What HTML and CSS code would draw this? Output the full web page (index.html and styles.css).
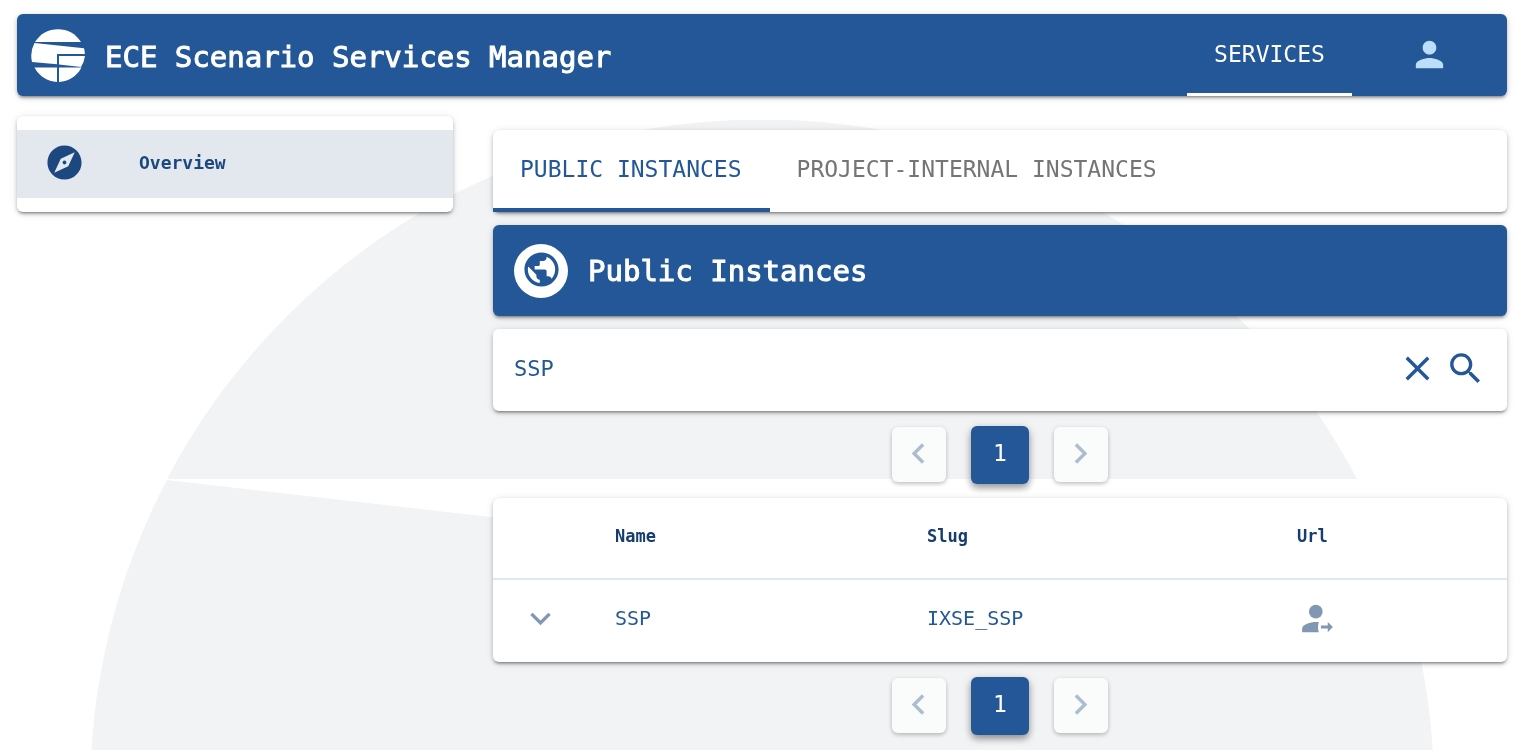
FILE: index.html
```html
<!DOCTYPE html>
<html lang="en">
<head>
<meta charset="utf-8">
<title>ECE Scenario Services Manager</title>
<link rel="stylesheet" href="styles.css">
</head>
<body>
<svg class="backdrop" viewBox="0 0 1344 1344" aria-hidden="true">
  <path d="M77 359A672 672 0 0 1 1267 359Z"/>
  <path d="M77 360L1322.400 502.500A672 672 0 1 1 76.800 360Z"/>
</svg>
<header class="topbar card-blue">
  <svg class="logo" viewBox="0 0 54 54" aria-hidden="true">
    <path fill="#fff" d="M4 14A27 27 0 0 1 50 14Z"/>
    <path fill="#fff" d="M3.500 15L53 20.300A27 27 0 0 1 53.900 26H26V36.300L1 34A27 27 0 0 1 3.500 15Z"/>
    <path fill="#fff" d="M28 28H54A27 27 0 0 1 50 39L28 36.500Z"/>
    <path fill="#fff" d="M3.500 39.500H26V54A27 27 0 0 1 3.500 39.500ZM28 39.500H50.500A27 27 0 0 1 28 54Z"/>
  </svg>
  <h1 class="title">ECE Scenario Services Manager</h1>
  <nav class="topnav">
    <a class="topnav-link" href="#services">SERVICES</a>
    <button class="account" type="button" aria-label="Account">
      <svg viewBox="0 0 24 24"><path d="M12 12c2.210 0 4-1.790 4-4s-1.790-4-4-4-4 1.790-4 4 1.790 4 4 4zm0 2c-2.670 0-8 1.340-8 4v2h16v-2c0-2.660-5.330-4-8-4z"/></svg>
    </button>
  </nav>
</header>
<div class="layout">
  <aside class="sidebar card">
    <a class="side-link" href="#overview">
      <svg viewBox="0 0 24 24"><path d="M12 10.900c-.610 0-1.100.490-1.100 1.100s.490 1.100 1.100 1.100c.610 0 1.100-.490 1.100-1.100s-.490-1.100-1.100-1.100zM12 2C6.480 2 2 6.480 2 12s4.480 10 10 10 10-4.480 10-10S17.520 2 12 2zm2.190 12.190L6 18l3.810-8.190L18 6l-3.810 8.190z"/></svg>
      <span>Overview</span>
    </a>
  </aside>
  <main class="content">
    <div class="tabs card" role="tablist">
      <button class="tab tab-active" type="button" role="tab" aria-selected="true">PUBLIC INSTANCES</button>
      <button class="tab" type="button" role="tab" aria-selected="false">PROJECT-INTERNAL INSTANCES</button>
    </div>
    <section class="banner card-blue">
      <span class="banner-icon">
        <svg viewBox="0 0 24 24"><path d="M12 2C6.480 2 2 6.480 2 12s4.480 10 10 10 10-4.480 10-10S17.520 2 12 2zM4 12c0-.610.080-1.210.210-1.780L8.990 15v1c0 1.100.900 2 2 2v1.930C7.060 19.430 4 16.070 4 12zm13.890 5.400c-.260-.810-1-1.400-1.900-1.400h-1v-3c0-.550-.450-1-1-1h-6v-2h2c.550 0 1-.450 1-1V7h2c1.100 0 2-.900 2-2v-.410C17.920 5.770 20 8.650 20 12c0 2.080-.810 3.980-2.110 5.400z"/></svg>
      </span>
      <h2 class="title">Public Instances</h2>
    </section>
    <form class="search card">
      <input class="search-input" type="text" value="SSP" aria-label="Search instances">
      <button class="icon-button" type="button" aria-label="Clear"><svg viewBox="0 0 24 24"><path d="M19 6.410L17.590 5 12 10.590 6.410 5 5 6.410 10.590 12 5 17.590 6.410 19 12 13.410 17.590 19 19 17.590 13.410 12z"/></svg></button>
      <button class="icon-button" type="submit" aria-label="Search"><svg viewBox="0 0 24 24"><path d="M15.500 14h-.790l-.280-.270C15.410 12.590 16 11.110 16 9.500 16 5.910 13.090 3 9.500 3S3 5.910 3 9.500 5.910 16 9.500 16c1.610 0 3.090-.590 4.230-1.570l.270.280v.790l5 4.990L20.490 19l-4.990-5zm-6 0C7.010 14 5 11.990 5 9.500S7.010 5 9.500 5 14 7.010 14 9.500 11.990 14 9.500 14z"/></svg></button>
    </form>
    <nav class="pager" aria-label="Pages, top">
      <button class="page-step" type="button" aria-label="Previous page"><svg viewBox="0 0 24 24"><path d="M15.410 7.410L14 6l-6 6 6 6 1.410-1.410L10.830 12z"/></svg></button>
      <button class="page-current" type="button" aria-current="page">1</button>
      <button class="page-step" type="button" aria-label="Next page"><svg viewBox="0 0 24 24"><path d="M10 6L8.590 7.410 13.170 12l-4.580 4.590L10 18l6-6z"/></svg></button>
    </nav>
    <div class="card">
      <table class="instances">
        <colgroup><col class="col-expand"><col class="col-name"><col class="col-slug"><col></colgroup>
        <thead><tr><td></td><th scope="col">Name</th><th scope="col">Slug</th><th scope="col">Url</th></tr></thead>
        <tbody><tr>
          <td class="cell-expand"><button class="row-button" type="button" aria-label="Expand row"><svg viewBox="0 0 24 24"><path d="M16.590 8.590L12 13.170 7.410 8.590 6 10l6 6 6-6z"/></svg></button></td>
          <td>SSP</td>
          <td>IXSE_SSP</td>
          <td><a class="row-button" href="#ssp" aria-label="Open SSP"><svg viewBox="0 0 24 24"><circle cx="11" cy="8" r="4"/><path d="M3 20v-2c0-2.660 5-4 8-4h1.800c-.600 1.900-.700 4 0 6zM14 16.100h4v-2.100l3 3-3 3v-2.100h-4z"/></svg></a></td>
        </tr></tbody>
      </table>
    </div>
    <nav class="pager" aria-label="Pages, bottom">
      <button class="page-step" type="button" aria-label="Previous page"><svg viewBox="0 0 24 24"><path d="M15.410 7.410L14 6l-6 6 6 6 1.410-1.410L10.830 12z"/></svg></button>
      <button class="page-current" type="button" aria-current="page">1</button>
      <button class="page-step" type="button" aria-label="Next page"><svg viewBox="0 0 24 24"><path d="M10 6L8.590 7.410 13.170 12l-4.580 4.590L10 18l6-6z"/></svg></button>
    </nav>
  </main>
</div>
</body>
</html>
```
FILE: styles.css
```css
* { box-sizing: border-box; }
html { height: 100%; overflow: hidden; }
body {
  margin: 0;
  min-height: 100%;
  padding: 14px 15px 0 17px;
  background: #fff;
  color: #245797;
  font-family: "DejaVu Sans Mono", "Liberation Mono", monospace;
}
button, input { font: inherit; color: inherit; border: 0; background: none; padding: 0; margin: 0; }
button { cursor: pointer; }
a { color: inherit; text-decoration: none; }
svg { display: block; fill: currentColor; }

/* Large emblem behind the page, centred on the window */
.backdrop {
  position: fixed;
  z-index: -1;
  top: 120px;
  left: 50%;
  width: 1344px;
  margin-left: -671px;
  color: #f2f3f5;
}

.card, .card-blue {
  border-radius: 6px;
  background: #fff;
  box-shadow: 0 3px 3px -2px rgba(0,0,0,.36), 0 2px 4px rgba(0,0,0,.22), 0 1px 10px rgba(0,0,0,.09);
}
.card-blue { background: #245797; color: #fff; }

.topbar { display: flex; align-items: center; min-height: 82px; padding-left: 14px; }
.logo { width: 54px; height: 54px; }
.title { margin: 0; font-size: 29px; line-height: 36px; font-weight: 400; -webkit-text-stroke: 1px; padding-left: 20px; }
.topbar .title { padding-top: 4px; }
.topnav { display: flex; align-self: stretch; margin-left: auto; }
.topnav-link {
  display: flex;
  align-items: center;
  justify-content: center;
  width: 165px;
  border-bottom: 3px solid #fff;
  font-size: 23px;
}
.account { width: 155px; display: flex; align-items: center; justify-content: center; padding-bottom: 2px; color: #bbdefb; }
.account svg { width: 41px; height: 41px; }

.layout { display: grid; grid-template-columns: 43fr 100fr; gap: 40px; align-items: start; margin-top: 20px; }
.sidebar { padding: 14px 0; }
.side-link {
  display: flex;
  align-items: center;
  gap: 54px;
  height: 68px;
  padding: 0 0 4px 27px;
  background: #e3e8ef;
  color: #1c487f;
  font-size: 18px;
  font-weight: 700;
}
.side-link svg { width: 41px; height: 41px; }

.content { padding-top: 14px; min-width: 0; }
.tabs { display: flex; }
.tab {
  height: 82px;
  padding: 0 28px 0 27px;
  border-bottom: 4px solid transparent;
  color: #757575;
  font-size: 23px;
}
.tab-active { border-color: #245797; color: #245797; }

.banner { display: flex; align-items: center; height: 91px; margin-top: 13px; padding-left: 21px; }
.banner-icon {
  display: flex;
  align-items: center;
  justify-content: center;
  width: 54px;
  height: 54px;
  padding-bottom: 2px;
  border-radius: 50%;
  background: #fff;
  color: #245797;
}
.banner-icon svg { width: 41px; height: 41px; }

.search { display: flex; align-items: center; height: 82px; margin-top: 13px; padding: 0 21px 4px; gap: 7px; }
.search-input { flex: 1; min-width: 0; font-size: 22px; outline: 0; }
.icon-button svg { width: 41px; height: 41px; }

.pager { display: flex; justify-content: center; align-items: center; gap: 25px; height: 87px; }
.page-step, .page-current {
  display: flex;
  align-items: center;
  justify-content: center;
  width: 54px;
  height: 55px;
  padding: 0 2px 2px 0;
  border-radius: 6px;
  background: #fafcfb;
  box-shadow: 0 2px 4px rgba(0,0,0,.2), 0 1px 6px rgba(0,0,0,.08);
}
.page-step { color: #adbdd0; }
.page-step svg { width: 41px; height: 41px; }
.page-current {
  width: 58px;
  height: 58px;
  padding: 0 0 4px;
  background: #245797;
  color: #fff;
  font-size: 23px;
  box-shadow: 0 4px 7px rgba(0,0,0,.35), 0 1px 12px rgba(0,0,0,.12);
}

.instances { width: 100%; border-collapse: collapse; table-layout: fixed; font-size: 20px; }
.col-expand { width: 122px; }
.col-name { width: 35%; }
.col-slug { width: 41%; }
.instances th { height: 81px; padding: 0 0 4px; text-align: left; font-size: 17px; color: #173d70; }
.instances td { height: 83px; padding: 0 0 6px; }
.instances thead td { height: 81px; }
.instances thead { border-bottom: 2px solid #d9eafb; }
.row-button { display: inline-block; vertical-align: middle; color: #8197b3; }
.row-button svg { width: 41px; height: 41px; }
.cell-expand .row-button { margin-left: 27px; }
.col-expand { width: 12%; }
.col-name { width: 31%; }
.col-slug { width: 36%; }
@media (min-width: 1200px) {
  .col-expand { width: 122px; }
  .col-name { width: 312px; }
  .col-slug { width: 370px; }
}
```
